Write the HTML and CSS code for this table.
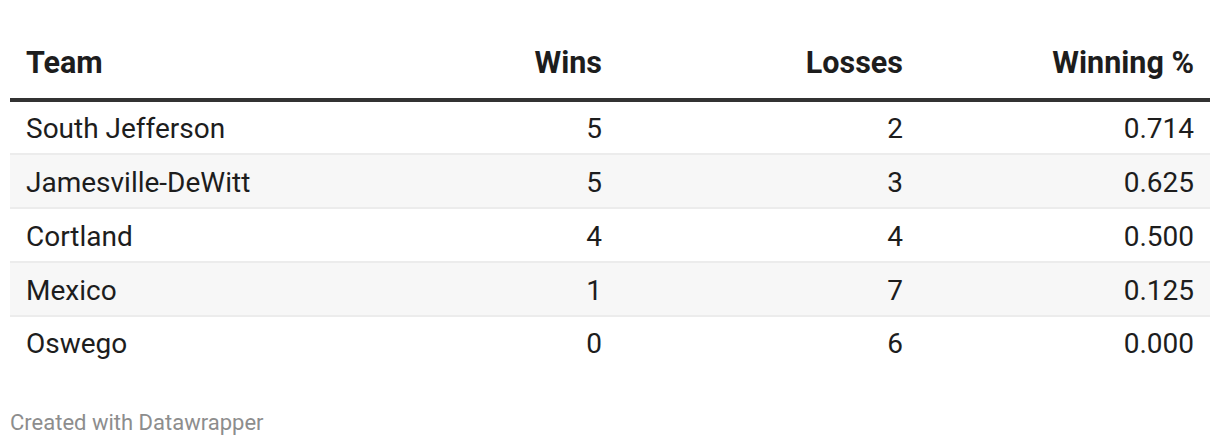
FILE: index.html
```html
<!DOCTYPE html>
<html>
<head>
<meta charset="utf-8">
<link rel="stylesheet" href="styles.css">
</head>
<body>
<div class="chart">
  <table class="standings">
    <thead>
      <tr>
        <th class="col-team">Team</th>
        <th class="col-num col-wins">Wins</th>
        <th class="col-num col-losses">Losses</th>
        <th class="col-num col-pct">Winning %</th>
      </tr>
    </thead>
    <tbody>
      <tr><td>South Jefferson</td><td class="num">5</td><td class="num">2</td><td class="num">0.714</td></tr>
      <tr class="alt"><td>Jamesville-DeWitt</td><td class="num">5</td><td class="num">3</td><td class="num">0.625</td></tr>
      <tr><td>Cortland</td><td class="num">4</td><td class="num">4</td><td class="num">0.500</td></tr>
      <tr class="alt"><td>Mexico</td><td class="num">1</td><td class="num">7</td><td class="num">0.125</td></tr>
      <tr class="last"><td>Oswego</td><td class="num">0</td><td class="num">6</td><td class="num">0.000</td></tr>
    </tbody>
  </table>
  <div class="footer">Created with Datawrapper</div>
</div>
</body>
</html>
```
FILE: styles.css
```css
html, body {
  margin: 0;
  padding: 0;
  background: #ffffff;
}
body {
  font-family: Roboto, "Liberation Sans", sans-serif;
  color: #1d1d1d;
}
.chart {
  padding: 10px 10px 0 10px;
}
.standings {
  width: 1200px;
  border-collapse: collapse;
  table-layout: fixed;
}
.standings th {
  box-sizing: border-box;
  font-size: 30.5px;
  font-weight: 700;
  line-height: 34px;
  padding: 36px 16px 18px 16px;
  border-bottom: 4px solid #333333;
  text-align: left;
}
.standings th.col-num {
  text-align: right;
}
.col-team { width: 304px; }
.col-wins { width: 304px; }
.col-losses { width: 301px; }
.col-pct { width: 291px; }
.standings td {
  font-size: 28px;
  line-height: 34px;
  height: 54px;
  box-sizing: border-box;
  padding: 3px 16px 0 16px;
  border-bottom: 2px solid #ececec;
  vertical-align: middle;
}
.standings td.num {
  text-align: right;
}
.standings tr.alt td {
  background: #f7f7f7;
}
.standings tr.last td {
  height: 52px;
  border-bottom: none;
}
.footer {
  margin-top: 42px;
  font-size: 22px;
  color: #8d8d8d;
  line-height: 26px;
}
```
